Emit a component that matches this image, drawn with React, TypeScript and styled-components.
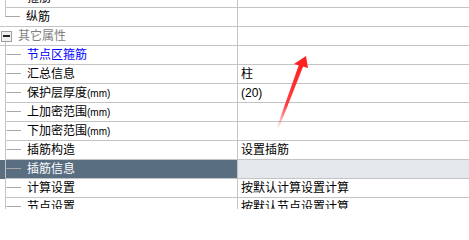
import React from "react";
import styled, { createGlobalStyle, css } from "styled-components";

type Row = {
  name: string;
  unit?: string;
  value?: string;
  kind?: "group" | "link" | "selected";
  last?: boolean;
};

const rows: Row[] = [
  { name: "箍筋" },
  { name: "纵筋", last: true },
  { name: "其它属性", kind: "group" },
  { name: "节点区箍筋", kind: "link" },
  { name: "汇总信息", value: "柱" },
  { name: "保护层厚度", unit: "(mm)", value: "(20)" },
  { name: "上加密范围", unit: "(mm)" },
  { name: "下加密范围", unit: "(mm)" },
  { name: "插筋构造", value: "设置插筋" },
  { name: "插筋信息", kind: "selected" },
  { name: "计算设置", value: "按默认计算设置计算" },
  { name: "节点设置", value: "按默认节点设置计算" },
];

const App: React.FC = () => (
  <>
    <GlobalStyle />
    <Page>
      <Grid>
        {rows.map((r, i) =>
          r.kind === "group" ? (
            <RowLine key={i}>
              <GroupCell>
                <Toggle>
                  <Minus />
                </Toggle>
                <GroupLabel>{r.name}</GroupLabel>
              </GroupCell>
              <ValueCell />
            </RowLine>
          ) : (
            <RowLine key={i} $selected={r.kind === "selected"}>
              <Gutter $last={r.last} />
              <NameCell $last={r.last}>
                <Branch $last={r.last} />
                <Label $link={r.kind === "link"}>
                  {r.name}
                  {r.unit && <Unit>{r.unit}</Unit>}
                </Label>
              </NameCell>
              <ValueCell $selected={r.kind === "selected"}>{r.value}</ValueCell>
            </RowLine>
          )
        )}
      </Grid>
      <Arrow viewBox="0 0 469 209" width="469" height="209">
        <defs>
          <linearGradient id="fade" x1="0" y1="1" x2="0" y2="0">
            <stop offset="0" stopColor="#ff3030" stopOpacity="0" />
            <stop offset="0.35" stopColor="#ff2a2a" stopOpacity="0.9" />
            <stop offset="1" stopColor="#ff2020" />
          </linearGradient>
        </defs>
        <polygon
          points="299.5,63 303.5,65.5 278.5,129 276.5,128.5"
          fill="url(#fade)"
        />
        <polygon points="306,56 294,64 308,68" fill="#ff2020" />
      </Arrow>
    </Page>
  </>
);

// --- Styles ---

const GlobalStyle = createGlobalStyle`
  html, body {
    margin: 0;
    padding: 0;
    background: #ffffff;
    overflow: hidden;
  }
  body {
    font-family: "Liberation Sans", "Noto Sans CJK SC", sans-serif;
    font-size: 12px;
    color: #000;
  }
`;

const Page = styled.div`
  position: relative;
  width: 469px;
  height: 209px;
  overflow: hidden;
`;

const Grid = styled.div`
  display: flex;
  flex-direction: column;
  margin-top: -11px;
`;

const line = "#c4c4c4";

const RowLine = styled.div<{ $selected?: boolean }>`
  display: flex;
  height: 19px;
  ${({ $selected }) =>
    $selected &&
    css`
      background: #5a6e82;
      color: #ffffff;
    `}
`;

const Gutter = styled.div<{ $last?: boolean }>`
  width: 5px;
  flex: none;
  box-sizing: border-box;
  border-bottom: 1px solid ${({ $last }) => ($last ? line : "transparent")};
`;

const NameCell = styled.div<{ $last?: boolean }>`
  width: 233px;
  flex: none;
  box-sizing: border-box;
  display: flex;
  align-items: center;
  border-left: 1px solid ${({ $last }) => ($last ? "transparent" : line)};
  border-right: 1px solid ${line};
  border-bottom: 1px solid ${line};
`;

const Branch = styled.span<{ $last?: boolean }>`
  align-self: flex-start;
  flex: none;
  box-sizing: border-box;
  width: 15px;
  height: 9px;
  border-bottom: 1px solid #a8a8a8;
  margin-left: ${({ $last }) => ($last ? "-1px" : "0")};
  border-left: 1px solid ${({ $last }) => ($last ? line : "transparent")};
`;

const Label = styled.span<{ $link?: boolean }>`
  margin-left: 6px;
  line-height: 18px;
  white-space: nowrap;
  color: ${({ $link }) => ($link ? "#0000ff" : "inherit")};
`;

const Unit = styled.span`
  font-size: 10px;
`;

const GroupCell = styled.div`
  width: 238px;
  flex: none;
  box-sizing: border-box;
  display: flex;
  align-items: center;
  padding-left: 1px;
  border-right: 1px solid ${line};
  border-bottom: 1px solid ${line};
`;

const Toggle = styled.span`
  position: relative;
  box-sizing: border-box;
  width: 11px;
  height: 11px;
  flex: none;
  border: 1px solid #a0a0a0;
  background: #f0f0f0;
  display: flex;
  align-items: center;
  justify-content: center;

  &::after {
    content: "";
    position: absolute;
    left: 3px;
    top: 10px;
    width: 1px;
    height: 4px;
    background: ${line};
  }
`;

const Minus = styled.span`
  width: 7px;
  height: 2px;
  background: #202020;
`;

const GroupLabel = styled.span`
  margin-left: 6px;
  line-height: 18px;
  color: #808080;
`;

const ValueCell = styled.div<{ $selected?: boolean }>`
  flex: 1;
  box-sizing: border-box;
  padding-left: 3px;
  line-height: 18px;
  white-space: nowrap;
  border-bottom: 1px solid ${line};
  ${({ $selected }) =>
    $selected &&
    css`
      background: #e4e8ec;
      color: #000000;
    `}
`;

const Arrow = styled.svg`
  position: absolute;
  left: 0;
  top: 0;
  pointer-events: none;
`;

export default App;
